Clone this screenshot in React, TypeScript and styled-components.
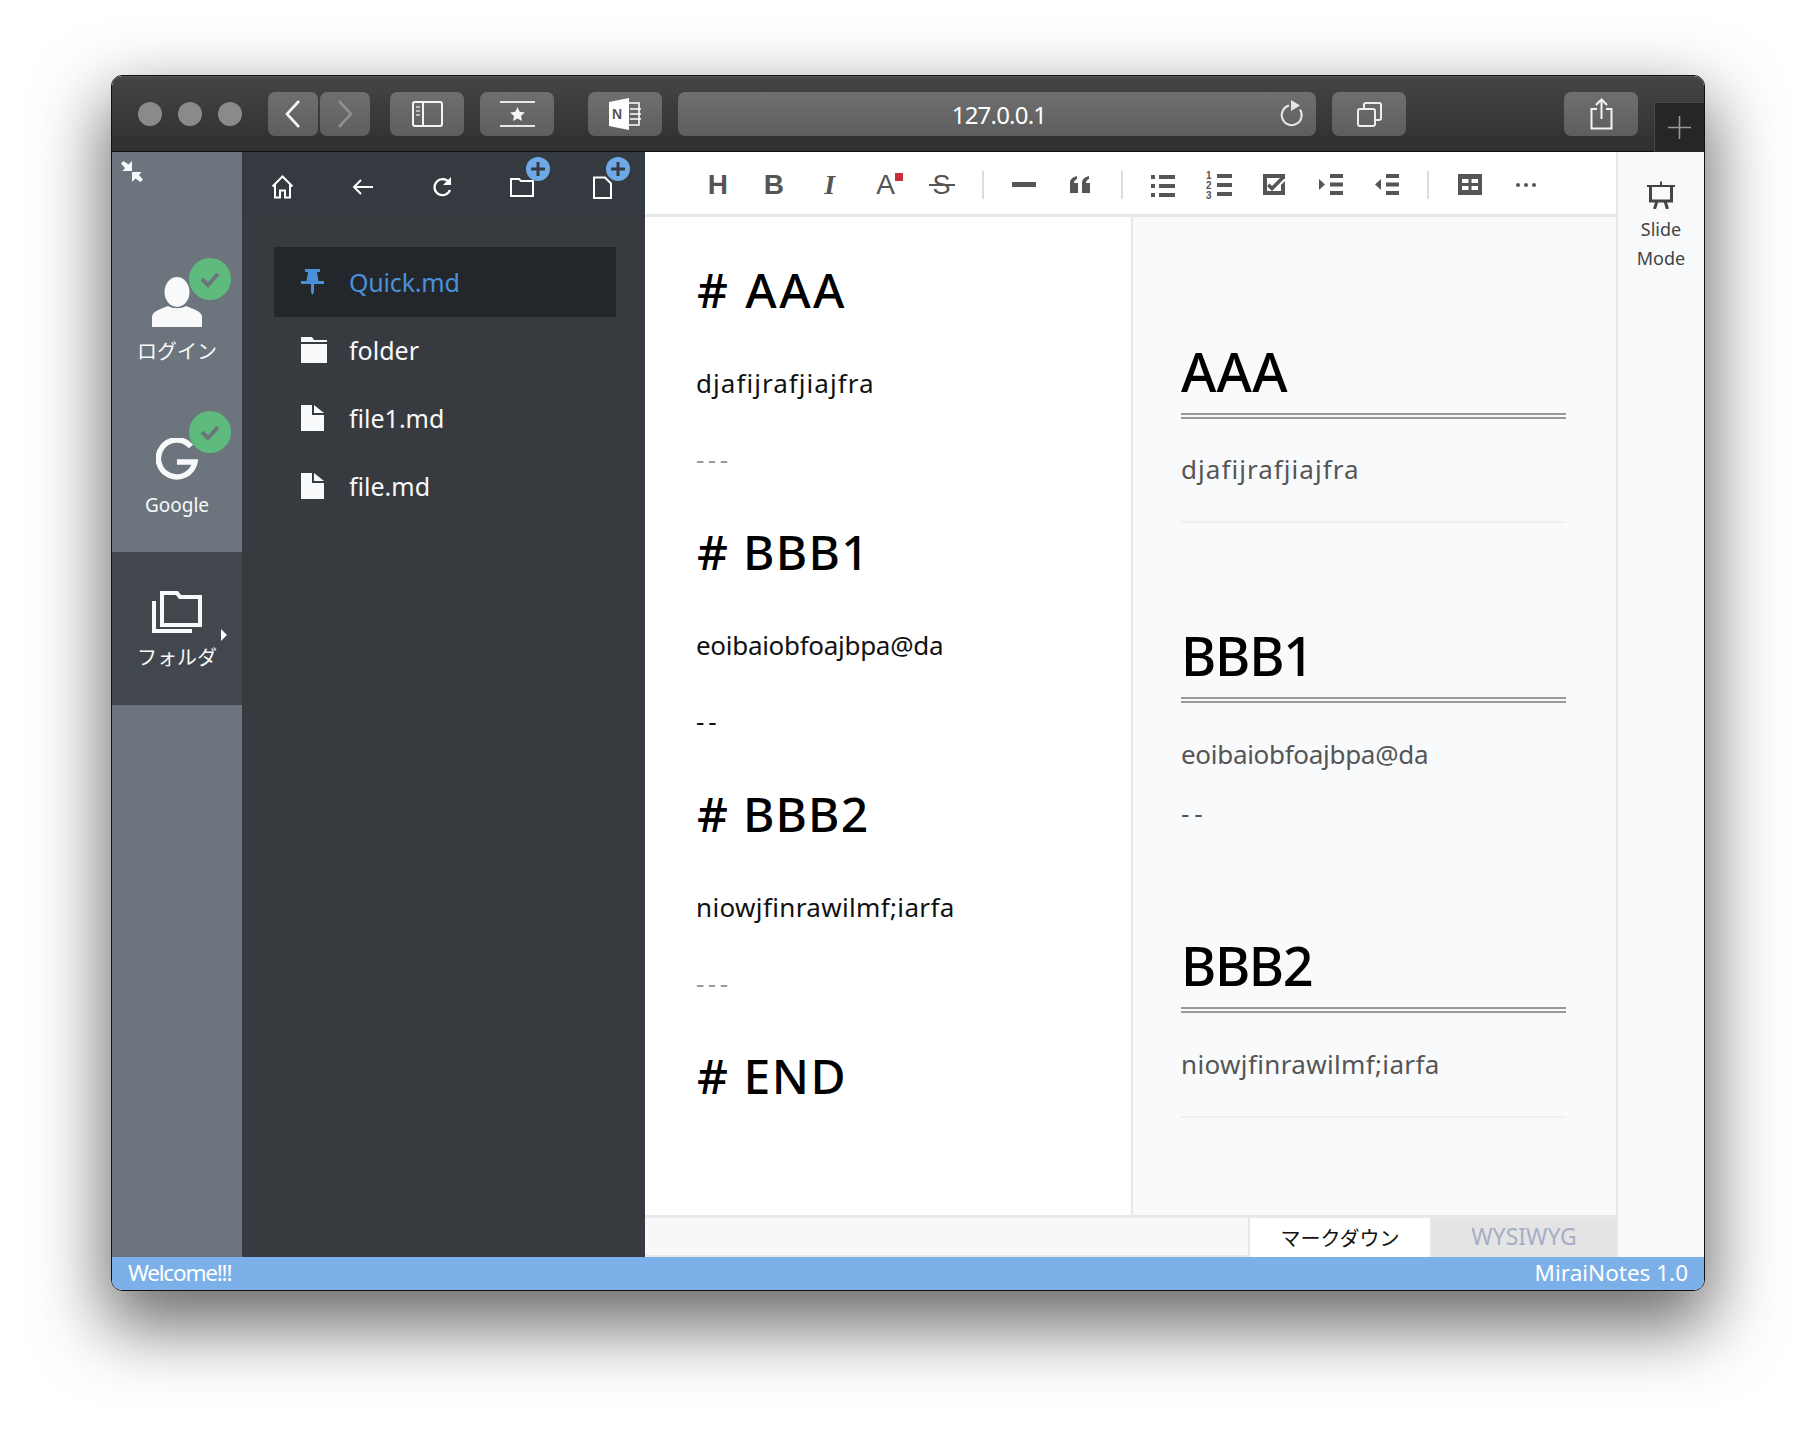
import { FC, ReactNode } from "react"
import styled, { createGlobalStyle } from "styled-components"

const GlobalStyle = createGlobalStyle`
  html, body {
    margin: 0;
    padding: 0;
    background: #fff;
  }
  * {
    box-sizing: border-box;
  }
`

const sans = `"Noto Sans", "Noto Sans CJK JP", sans-serif`

const Stage = styled.div`
  width: 1816px;
  height: 1438px;
  padding: 75px 0 0 111px;
  overflow: hidden;
  font-family: ${sans};
`

const Window = styled.div`
  width: 1594px;
  height: 1216px;
  display: flex;
  flex-direction: column;
  border: 1.5px solid #111;
  border-radius: 11px;
  overflow: hidden;
  box-shadow: 0 30px 70px 6px rgba(0, 0, 0, 0.58);
`

const TitleBar = styled.div`
  height: 76px;
  flex: none;
  display: flex;
  align-items: flex-start;
  padding: 15px 0 0 26px;
  background: linear-gradient(#454545, #2f2f2f);
  border-top: 1px solid #555;
  border-bottom: 1.5px solid #111;
`

const Dot = styled.span`
  width: 24px;
  height: 24px;
  margin: 10px 16px 0 0;
  border-radius: 50%;
  background: #8a8a8a;
  &:nth-child(3) {
    margin-right: 0;
  }
`

const BarButton = styled.div<{ $w: number; $ml: number }>`
  width: ${(p) => p.$w}px;
  height: 44px;
  flex: none;
  margin-left: ${(p) => p.$ml}px;
  display: flex;
  align-items: center;
  justify-content: center;
  border-radius: 7px;
  color: #f2f2f2;
  background: linear-gradient(#6f6f6f, #5e5e5e);
`

const Address = styled(BarButton)`
  position: relative;
  padding-left: 4px;
  font-size: 24px;
  letter-spacing: -0.8px;
  color: #fff;
`

const ReloadSlot = styled.span`
  position: absolute;
  right: 11px;
  top: 8px;
  display: flex;
`

const PlusTab = styled.div`
  width: 50px;
  height: 50px;
  margin: 10px 0 0 16px;
  display: flex;
  align-items: center;
  justify-content: center;
  background: #262626;
  border: 1px solid #4a4a4a;
  border-bottom: 0;
  border-right: 0;
  color: #9a9a9a;
`

const Body = styled.div`
  flex: 1;
  min-height: 0;
  display: flex;
`

const Rail = styled.aside`
  width: 130px;
  flex: none;
  background: #6c757d;
  color: #f8f9fa;
`

const RailTop = styled.div`
  height: 94px;
  padding: 9px 0 0 9px;
`

const RailItem = styled.div<{ $active?: boolean }>`
  position: relative;
  height: 153px;
  padding-top: 31px;
  display: flex;
  flex-direction: column;
  align-items: center;
  background: ${(p) => (p.$active ? "#42474d" : "transparent")};
`

const RailIcon = styled.div`
  height: 50px;
  display: flex;
  align-items: flex-end;
`

const RailLabel = styled.div<{ $size?: number }>`
  height: 50px;
  line-height: 50px;
  font-size: ${(p) => p.$size ?? 20}px;
`

const Badge = styled.span`
  position: absolute;
  left: 77px;
  top: 12px;
  width: 42px;
  height: 42px;
  display: flex;
  align-items: center;
  justify-content: center;
  border-radius: 50%;
  background: #5fba7d;
  color: #6c757d;
`

const Caret = styled.span`
  position: absolute;
  left: 109px;
  top: 77px;
  border-left: 6px solid #f8f9fa;
  border-top: 6px solid transparent;
  border-bottom: 6px solid transparent;
`

const FilePanel = styled.section`
  width: 403px;
  flex: none;
  background: #373b40;
  color: #f8f9fa;
`

const FileBar = styled.div`
  height: 64px;
  display: flex;
  background: #343a40;
`

const FileTool = styled.div`
  position: relative;
  width: 80px;
  display: flex;
  align-items: center;
  justify-content: center;
  padding-top: 6px;
`

const PlusBadge = styled.span`
  position: absolute;
  left: 44px;
  top: 5px;
  width: 24px;
  height: 24px;
  display: flex;
  align-items: center;
  justify-content: center;
  border-radius: 50%;
  background: #6fa8e6;
  color: #343a40;
`

const FileList = styled.ul`
  list-style: none;
  margin: 0;
  padding: 31px 0 0 32px;
  width: 374px;
`

const FileRow = styled.li<{ $active?: boolean }>`
  height: ${(p) => (p.$active ? 70 : 68)}px;
  margin-bottom: ${(p) => (p.$active ? -1 : 0)}px;
  display: flex;
  align-items: center;
  padding-left: 27px;
  font-size: 25px;
  letter-spacing: ${(p) => (p.$active ? -0.2 : 0)}px;
  background: ${(p) => (p.$active ? "#23272b" : "transparent")};
  color: ${(p) => (p.$active ? "#4a90d9" : "#f8f9fa")};
`

const FileIcon = styled.span`
  width: 48px;
  flex: none;
  display: flex;
`

const Main = styled.main`
  flex: 1;
  min-width: 0;
  display: flex;
  flex-direction: column;
  background: #fff;
`

const ToolBar = styled.div`
  height: 65px;
  flex: none;
  display: flex;
  align-items: center;
  padding: 3px 0 0 45px;
  border-bottom: 3px solid #e6e8ea;
  color: #555;
`

const Tool = styled.span`
  position: relative;
  width: 55.9px;
  flex: none;
  display: flex;
  align-items: center;
  justify-content: center;
  color: #555;
`

const Letter = styled.span<{ $bold?: boolean; $italic?: boolean; $size?: number }>`
  position: relative;
  font-family: ${(p) => (p.$italic ? '"Liberation Serif"' : '"Liberation Sans"')}, sans-serif;
  font-size: ${(p) => p.$size ?? 28}px;
  line-height: 30px;
  font-weight: ${(p) => (p.$bold ? 700 : 400)};
  font-style: ${(p) => (p.$italic ? "italic" : "normal")};
`

const StrikeLine = styled.span`
  position: absolute;
  left: -4px;
  right: -4px;
  top: 14px;
  height: 2px;
  background: #555;
`

const RedDot = styled.span`
  position: absolute;
  right: -8px;
  top: 3px;
  width: 8px;
  height: 8px;
  background: #c7303a;
`

const ToolSep = styled.span`
  width: 27px;
  height: 28px;
  flex: none;
  background: linear-gradient(#dcdcdc, #dcdcdc) center / 2px 100% no-repeat;
`

const Panes = styled.div`
  flex: 1;
  min-height: 0;
  display: flex;
`

const Editor = styled.div`
  width: 486px;
  flex: none;
  padding: 37px 0 0 51px;
  color: #111;
`

const EditorHeading = styled.div<{ $ls?: number }>`
  height: 72px;
  padding-left: 1px;
  line-height: 72px;
  font-size: 48px;
  font-weight: 500;
  color: #000;
  letter-spacing: ${(p) => p.$ls ?? 1.5}px;
`

const EditorLine = styled.div<{ $muted?: boolean; $ls?: number }>`
  height: 38px;
  line-height: 38px;
  font-size: 26px;
  letter-spacing: ${(p) => p.$ls ?? 0}px;
  color: ${(p) => (p.$muted ? "#9a9a9a" : "#111")};
`

const Preview = styled.div`
  flex: 1;
  min-width: 0;
  padding: 0 50px 0 48px;
  background: #f9fafc;
  border-left: 2px solid #e6e8ea;
`

const PreviewHeading = styled.h1<{ $top: number; $ls: number }>`
  margin: ${(p) => p.$top}px 0 0;
  padding-bottom: 14px;
  line-height: 56px;
  font-size: 54px;
  font-weight: 500;
  letter-spacing: ${(p) => p.$ls}px;
  color: #000;
  border-bottom: 6px double #999;
`

const PreviewText = styled.p<{ $top: number; $ls: number }>`
  margin: ${(p) => p.$top}px 0 0;
  line-height: 38px;
  font-size: 26px;
  letter-spacing: ${(p) => p.$ls}px;
  color: #555;
`

const PreviewRule = styled.hr<{ $top: number }>`
  margin: ${(p) => p.$top}px 0 0;
  border: 0;
  height: 2px;
  background: #eef0f2;
`

const ModeBar = styled.div`
  height: 42px;
  flex: none;
  display: flex;
  justify-content: flex-end;
  background: #f8f8f8;
  border-top: 3px solid #e6e8ea;
  border-bottom: 2px solid #e6e8ea;
`

const ModeTab = styled.div<{ $active?: boolean }>`
  width: 184px;
  margin-bottom: -2px;
  padding-bottom: ${(p) => (p.$active ? 0 : 3)}px;
  display: flex;
  align-items: center;
  justify-content: center;
  font-size: ${(p) => (p.$active ? 20 : 23)}px;
  color: ${(p) => (p.$active ? "#111" : "#a5aec4")};
  background: ${(p) => (p.$active ? "#fff" : "#e4e4e4")};
  ${(p) => (p.$active ? "border-left: 2px solid #e6e8ea; border-right: 2px solid #e6e8ea;" : "")}
`

const SlidePanel = styled.div`
  width: 88px;
  flex: none;
  padding-top: 29px;
  display: flex;
  flex-direction: column;
  align-items: center;
  background: #f8f9fa;
  border-left: 2px solid #e6e8ea;
  color: #444;
  font-size: 18px;
  line-height: 28.5px;
  text-align: center;
`

const SlideIcon = styled.div`
  height: 34px;
  display: flex;
`

const StatusBar = styled.footer`
  height: 33px;
  flex: none;
  display: flex;
  align-items: center;
  justify-content: space-between;
  padding: 0 16px 2px 16px;
  background: #7cb0e8;
  color: #fff;
  font-size: 22.5px;
`

const Welcome = styled.span`
  letter-spacing: -1.2px;
`

type IconProps = { w: number; h?: number; vb: string; children: ReactNode }

const Icon: FC<IconProps> = ({ w, h, vb, children }) => (
  <svg width={w} height={h ?? w} viewBox={vb} fill="none" stroke="none" style={{ display: "block" }}>
    {children}
  </svg>
)

const Bars: FC<{ x: number; y?: number[] }> = ({ x, y = [2, 11, 20] }) => (
  <>
    {y.map((v) => (
      <rect key={v} x={x} y={v} width={24 - x + 4} height="4" fill="currentColor" />
    ))}
  </>
)

const Check: FC = () => (
  <Icon w={22} vb="0 0 22 22">
    <path d="M3 11l6 6L19 6" stroke="currentColor" strokeWidth="4" />
  </Icon>
)

const PlusMark: FC = () => (
  <Icon w={16} vb="0 0 16 16">
    <path d="M8 1v14M1 8h14" stroke="currentColor" strokeWidth="3" />
  </Icon>
)

const App: FC = () => {
  return (
    <>
      <GlobalStyle />
      <Stage>
        <Window>
          <TitleBar>
            <Dot />
            <Dot />
            <Dot />
            <BarButton $w={50} $ml={26}>
              <Icon w={20} h={32} vb="0 0 20 32">
                <path d="M16 3L4 16l12 13" stroke="#f4f4f4" strokeWidth="2.6" />
              </Icon>
            </BarButton>
            <BarButton $w={50} $ml={2}>
              <Icon w={20} h={32} vb="0 0 20 32">
                <path d="M4 3l12 13L4 29" stroke="#8f8f8f" strokeWidth="2.6" />
              </Icon>
            </BarButton>
            <BarButton $w={74} $ml={20}>
              <Icon w={31} h={26} vb="0 0 31 26">
                <rect x="1" y="1" width="29" height="24" rx="2" stroke="#f4f4f4" strokeWidth="2" />
                <path d="M11 1v24" stroke="#f4f4f4" strokeWidth="2" />
                <path d="M4 6h4M4 10h4M4 14h4" stroke="#bbb" strokeWidth="2" />
              </Icon>
            </BarButton>
            <BarButton $w={74} $ml={16}>
              <Icon w={35} h={26} vb="0 0 35 26">
                <path d="M0 1h35M0 25h35" stroke="#e8e8e8" strokeWidth="2" />
                <path
                  d="M17.500 6l2.200 4.800 5.200.6-3.900 3.500 1 5.100-4.500-2.600-4.500 2.600 1-5.100-3.900-3.500 5.200-.6z"
                  fill="#f6f6f6"
                />
              </Icon>
            </BarButton>
            <BarButton $w={74} $ml={34}>
              <Icon w={33} h={32} vb="0 0 33 32">
                <path d="M0 4L20 0v32L0 28z" fill="#fff" />
                <text x="3" y="21" fontSize="14" fontWeight="700" fill="#555" fontFamily="Liberation Sans">
                  N
                </text>
                <path
                  d="M20 5h10v22H20M21 11h11M21 16h11M21 21h11"
                  stroke="#fff"
                  strokeWidth="1.6"
                />
              </Icon>
            </BarButton>
            <Address $w={638} $ml={16}>
              127.0.0.1
              <ReloadSlot>
                <Icon w={26} h={28} vb="0 0 26 28">
                  <path
                    d="M10 5.500a10 10 0 1 0 11 4"
                    stroke="#e6e6e6"
                    strokeWidth="2"
                  />
                  <path d="M12 0l9 5.500-9 5.500z" fill="#e6e6e6" />
                </Icon>
              </ReloadSlot>
            </Address>
            <BarButton $w={74} $ml={16}>
              <Icon w={25} h={25} vb="0 0 25 25">
                <rect x="1" y="7" width="17" height="17" rx="2" stroke="#eee" strokeWidth="2" />
                <path d="M7 7V3a2 2 0 0 1 2-2h13a2 2 0 0 1 2 2v13a2 2 0 0 1-2 2h-4" stroke="#eee" strokeWidth="2" />
              </Icon>
            </BarButton>
            <BarButton $w={74} $ml={158}>
              <Icon w={23} h={32} vb="0 0 23 32">
                <path d="M7 11H1.500v19.500h20V11H16" stroke="#f4f4f4" strokeWidth="2" />
                <path d="M11.500 21V2M6 7l5.500-5.500L17 7" stroke="#f4f4f4" strokeWidth="2" />
              </Icon>
            </BarButton>
            <PlusTab>
              <Icon w={23} vb="0 0 23 23">
                <path d="M11.500 0v23M0 11.500h23" stroke="currentColor" strokeWidth="1.6" />
              </Icon>
            </PlusTab>
          </TitleBar>

          <Body>
            <Rail>
              <RailTop>
                <Icon w={22} h={21} vb="0 0 22 21">
                  <path d="M11 10V0L7.500 3.500 2.500 0 0 2.500 4 7 1.500 10z" fill="#f8f9fa" />
                  <path d="M11 11v10l3.500-3.500 5 3.500 2.500-2.500-4-4.500 2.500-3z" fill="#f8f9fa" />
                </Icon>
              </RailTop>
              <RailItem>
                <RailIcon>
                  <Icon w={50} vb="0 0 50 50">
                    <ellipse cx="25" cy="15" rx="12.500" ry="15" fill="currentColor" />
                    <path d="M0 50V40c0-6 9-8 16-11 5 3 13 3 18 0 7 3 16 5 16 11v10z" fill="currentColor" />
                  </Icon>
                </RailIcon>
                <RailLabel>ログイン</RailLabel>
                <Badge>
                  <Check />
                </Badge>
              </RailItem>
              <RailItem>
                <RailIcon>
                  <Icon w={42} h={42} vb="0 0 42 42">
                    <path
                      d="M35 8.500A18.500 18.500 0 1 0 39 24H21"
                      stroke="currentColor"
                      strokeWidth="5.500"
                    />
                  </Icon>
                </RailIcon>
                <RailLabel $size={19}>Google</RailLabel>
                <Badge>
                  <Check />
                </Badge>
              </RailItem>
              <RailItem $active>
                <RailIcon>
                  <Icon w={50} h={42} vb="0 0 50 42">
                    <path d="M2 10v30h38" stroke="currentColor" strokeWidth="4" />
                    <path d="M10 34V2h15l3 4h20v28z" stroke="currentColor" strokeWidth="4" />
                  </Icon>
                </RailIcon>
                <RailLabel>フォルダ</RailLabel>
                <Caret />
              </RailItem>
            </Rail>

            <FilePanel>
              <FileBar>
                <FileTool>
                  <Icon w={23} h={24} vb="0 0 23 24">
                    <path d="M1.500 11.500L11.500 1.500l10 10M4 9.500V22.500h5v-7h5v7h5V9.500" stroke="#fff" strokeWidth="2" />
                  </Icon>
                </FileTool>
                <FileTool>
                  <Icon w={21} h={16} vb="0 0 21 16">
                    <path d="M21 8H2M9 1L2 8l7 7" stroke="#fff" strokeWidth="2" />
                  </Icon>
                </FileTool>
                <FileTool>
                  <Icon w={20} h={21} vb="0 0 20 21">
                    <path d="M17 5.500A8 8 0 1 0 18 13" stroke="#fff" strokeWidth="2.200" />
                    <path d="M19 0v8h-8z" fill="#fff" />
                  </Icon>
                </FileTool>
                <FileTool>
                  <Icon w={24} h={20} vb="0 0 24 20">
                    <path d="M1 18V2h8l2 2h12v15H1z" stroke="#fff" strokeWidth="2" />
                  </Icon>
                  <PlusBadge>
                    <PlusMark />
                  </PlusBadge>
                </FileTool>
                <FileTool>
                  <Icon w={19} h={23} vb="0 0 19 23">
                    <path d="M1 1.500h11l6 6V22H1z" stroke="#fff" strokeWidth="2" />
                  </Icon>
                  <PlusBadge>
                    <PlusMark />
                  </PlusBadge>
                </FileTool>
              </FileBar>
              <FileList>
                <FileRow $active>
                  <FileIcon>
                    <Icon w={23} h={26} vb="0 0 23 26">
                      <path d="M4 0h15v3h-3l1.500 9H23v3H13v8l-1.500 3-1.500-3v-8H0v-3h5.500L7 3H4z" fill="#4a90d9" />
                    </Icon>
                  </FileIcon>
                  Quick.md
                </FileRow>
                <FileRow>
                  <FileIcon>
                    <Icon w={26} h={26} vb="0 0 26 26">
                      <path d="M0 0h11l2 3h13v2H0zM0 7h26v19H0z" fill="#f8f9fa" />
                    </Icon>
                  </FileIcon>
                  folder
                </FileRow>
                <FileRow>
                  <FileIcon>
                    <Icon w={23} h={26} vb="0 0 23 26">
                      <path d="M0 0h11v10h12v16H0zM13 0l10 8H13z" fill="#f8f9fa" />
                    </Icon>
                  </FileIcon>
                  file1.md
                </FileRow>
                <FileRow>
                  <FileIcon>
                    <Icon w={23} h={26} vb="0 0 23 26">
                      <path d="M0 0h11v10h12v16H0zM13 0l10 8H13z" fill="#f8f9fa" />
                    </Icon>
                  </FileIcon>
                  file.md
                </FileRow>
              </FileList>
            </FilePanel>

            <Main>
              <ToolBar>
                <Tool>
                  <Letter $bold>H</Letter>
                </Tool>
                <Tool>
                  <Letter $bold>B</Letter>
                </Tool>
                <Tool>
                  <Letter $italic $bold>
                    I
                  </Letter>
                </Tool>
                <Tool>
                  <Letter>
                    A<RedDot />
                  </Letter>
                </Tool>
                <Tool>
                  <Letter $size={27}>
                    S<StrikeLine />
                  </Letter>
                </Tool>
                <ToolSep />
                <Tool>
                  <Icon w={24} h={6} vb="0 0 24 6">
                    <rect width="24" height="5" fill="currentColor" />
                  </Icon>
                </Tool>
                <Tool>
                  <Icon w={20} h={17} vb="0 0 20 17">
                    <path
                      d="M0 7c0-4 3-6 7-7v3C5 4 4 5 4 7h4v10H0zM12 7c0-4 3-6 7-7v3c-2 1-3 2-3 4h4v10h-8z"
                      fill="currentColor"
                    />
                  </Icon>
                </Tool>
                <ToolSep />
                <Tool>
                  <Icon w={24} vb="0 0 24 24">
                    <Bars x={8} />
                    <rect y="2" width="4" height="4" fill="currentColor" />
                    <rect y="11" width="4" height="4" fill="currentColor" />
                    <rect y="20" width="4" height="4" fill="currentColor" />
                  </Icon>
                </Tool>
                <Tool>
                  <Icon w={26} h={30} vb="0 0 26 30">
                    <path d="M11 6h15M11 15h15M11 24h15" stroke="currentColor" strokeWidth="4" />
                    <text x="0" y="9" fontSize="10" fontWeight="700" fill="currentColor" fontFamily="Liberation Sans">
                      1
                    </text>
                    <text x="0" y="19" fontSize="10" fontWeight="700" fill="currentColor" fontFamily="Liberation Sans">
                      2
                    </text>
                    <text x="0" y="29" fontSize="10" fontWeight="700" fill="currentColor" fontFamily="Liberation Sans">
                      3
                    </text>
                  </Icon>
                </Tool>
                <Tool>
                  <Icon w={23} h={21} vb="0 0 23 21">
                    <path d="M0 0h22v5h-1L9 17l-5-5 2.500-2.500L9 12l8-8H4v13h14v-6l4-4v14H0z" fill="currentColor" />
                  </Icon>
                </Tool>
                <Tool>
                  <Icon w={24} h={21} vb="0 0 24 21">
                    <path d="M0 5l6 5.500L0 16z" fill="currentColor" />
                    <path d="M11 2h13M11 10.500h13M11 19h13" stroke="currentColor" strokeWidth="4" />
                  </Icon>
                </Tool>
                <Tool>
                  <Icon w={24} h={21} vb="0 0 24 21">
                    <path d="M6 5L0 10.500 6 16z" fill="currentColor" />
                    <path d="M11 2h13M11 10.500h13M11 19h13" stroke="currentColor" strokeWidth="4" />
                  </Icon>
                </Tool>
                <ToolSep />
                <Tool>
                  <Icon w={24} h={21} vb="0 0 24 21">
                    <path
                      d="M0 0h24v21H0zM4 5v4h6.500V5zM13.500 5v4H20V5zM4 12v4h6.500v-4zM13.500 12v4H20v-4z"
                      fill="currentColor"
                      fillRule="evenodd"
                    />
                  </Icon>
                </Tool>
                <Tool>
                  <Icon w={20} h={4} vb="0 0 20 4">
                    <circle cx="2" cy="2" r="2" fill="currentColor" />
                    <circle cx="10" cy="2" r="2" fill="currentColor" />
                    <circle cx="18" cy="2" r="2" fill="currentColor" />
                  </Icon>
                </Tool>
              </ToolBar>

              <Panes>
                <Editor>
                  <EditorHeading $ls={2.4}># AAA</EditorHeading>
                  <EditorLine>&nbsp;</EditorLine>
                  <EditorLine $ls={1.05}>djafijrafjiajfra</EditorLine>
                  <EditorLine>&nbsp;</EditorLine>
                  <EditorLine $muted $ls={3.5}>---</EditorLine>
                  <EditorLine>&nbsp;</EditorLine>
                  <EditorHeading $ls={1.3}># BBB1</EditorHeading>
                  <EditorLine>&nbsp;</EditorLine>
                  <EditorLine $ls={-0.3}>eoibaiobfoajbpa@da</EditorLine>
                  <EditorLine>&nbsp;</EditorLine>
                  <EditorLine $ls={4}>--</EditorLine>
                  <EditorLine>&nbsp;</EditorLine>
                  <EditorHeading $ls={1.2}># BBB2</EditorHeading>
                  <EditorLine>&nbsp;</EditorLine>
                  <EditorLine $ls={0.35}>niowjfinrawilmf;iarfa</EditorLine>
                  <EditorLine>&nbsp;</EditorLine>
                  <EditorLine $muted $ls={3.5}>---</EditorLine>
                  <EditorLine>&nbsp;</EditorLine>
                  <EditorHeading># END</EditorHeading>
                </Editor>
                <Preview>
                  <PreviewHeading $top={126} $ls={0.2}>AAA</PreviewHeading>
                  <PreviewText $top={31} $ls={1.05}>djafijrafjiajfra</PreviewText>
                  <PreviewRule $top={33} />
                  <PreviewHeading $top={104} $ls={-1.2}>BBB1</PreviewHeading>
                  <PreviewText $top={32} $ls={-0.3}>eoibaiobfoajbpa@da</PreviewText>
                  <PreviewText $top={21} $ls={5}>--</PreviewText>
                  <PreviewHeading $top={105} $ls={-1.4}>BBB2</PreviewHeading>
                  <PreviewText $top={32} $ls={0.35}>niowjfinrawilmf;iarfa</PreviewText>
                  <PreviewRule $top={33} />
                </Preview>
              </Panes>

              <ModeBar>
                <ModeTab $active>マークダウン</ModeTab>
                <ModeTab>WYSIWYG</ModeTab>
              </ModeBar>
            </Main>

            <SlidePanel>
              <SlideIcon>
                <Icon w={28} h={28} vb="0 0 28 28">
                  <path d="M0 4h28v2H0zM13 1l1-1 1 1v3h-2z" fill="currentColor" />
                  <path d="M3.500 5v15h21V5" stroke="currentColor" strokeWidth="3" />
                  <path d="M10 20L7.500 28M18 20l2.500 8" stroke="currentColor" strokeWidth="3" />
                </Icon>
              </SlideIcon>
              Slide
              <br />
              Mode
            </SlidePanel>
          </Body>

          <StatusBar>
            <Welcome>Welcome!!!</Welcome>
            <span>MiraiNotes 1.0</span>
          </StatusBar>
        </Window>
      </Stage>
    </>
  )
}

export default App
